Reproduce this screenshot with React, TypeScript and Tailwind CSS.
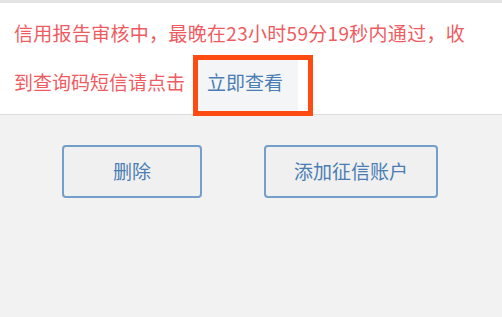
export default function App() {
  return (
    <div className="w-[502px] h-[317px] bg-[#f2f2f2] font-['Noto_Sans_CJK_SC','Noto_Sans',sans-serif] overflow-hidden">
      <div className="h-[3px] bg-[#e4e4e4]" />
      <div className="bg-white h-[112px] border-b border-[#dcdcdc] pl-[14px] relative">
        <div className="pt-[16px] text-[19px] leading-[28px] text-[#ef5b5f] whitespace-nowrap tracking-[0.3px]">
          信用报告审核中，最晚在23小时59分19秒内通过，收
        </div>
        <div className="flex items-start mt-[8px]">
          <span className="mt-[13px] text-[19px] leading-[28px] text-[#ef5b5f] whitespace-nowrap">
            到查询码短信请点击
          </span>
          <div className="ml-[8px] w-[120px] h-[61px] border-[5px] border-[#ff4b12] bg-white relative z-10">
            <div className="w-[100px] h-full bg-[#f4f5f7] flex items-center pb-[6px] pl-[9px] text-[19px] text-[#4a7db4]">
              立即查看
            </div>
          </div>
        </div>
      </div>
      <div className="flex pl-[62px] gap-[62px] mt-[30px]">
        <button className="w-[140px] h-[53px] rounded-[4px] border-2 border-[#739fca] bg-[#f0f0f0] text-[19px] text-[#4a7db4]">
          删除
        </button>
        <button className="w-[174px] h-[53px] rounded-[4px] border-2 border-[#739fca] bg-[#f0f0f0] text-[19px] text-[#4a7db4]">
          添加征信账户
        </button>
      </div>
    </div>
  );
}
